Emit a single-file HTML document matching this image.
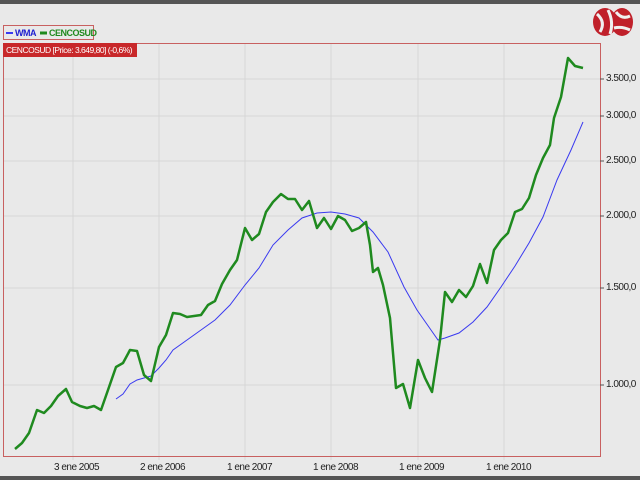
<!DOCTYPE html>
<html><head><style>
body{margin:0;width:640px;height:480px;background:#e9e9e9;overflow:hidden;font-family:"Liberation Sans",sans-serif;position:relative}
.t{position:absolute;font-size:10px;color:#222;letter-spacing:-0.5px;white-space:nowrap}
</style></head><body>
<div style="position:absolute;left:0;top:0;width:640px;height:4px;background:#555"></div>
<div style="position:absolute;left:0;top:476px;width:640px;height:4px;background:#555"></div>
<svg width="640" height="480" style="position:absolute;left:0;top:0">
<g stroke="#d6d6d6" stroke-width="1">
<line x1="73" y1="43" x2="73" y2="460"/><line x1="159" y1="43" x2="159" y2="460"/><line x1="245" y1="43" x2="245" y2="460"/><line x1="331" y1="43" x2="331" y2="460"/><line x1="418" y1="43" x2="418" y2="460"/><line x1="504" y1="43" x2="504" y2="460"/>
<line x1="3" y1="79" x2="604" y2="79"/><line x1="3" y1="116" x2="604" y2="116"/><line x1="3" y1="161" x2="604" y2="161"/><line x1="3" y1="216" x2="604" y2="216"/><line x1="3" y1="288" x2="604" y2="288"/><line x1="3" y1="385" x2="604" y2="385"/>
</g>
<rect x="3.5" y="43.5" width="597" height="413" fill="none" stroke="#c86060" stroke-width="1"/>
<rect x="3.5" y="25.5" width="90" height="14" fill="none" stroke="#c86060"/>
<polyline fill="none" stroke="#3a3af0" stroke-width="1" points="116,399 123,394 130,384 137,380 144,378 151,376 159,368 166,360 173,350 187,340 201,330 215,320 230,305 245,285 259,268 273,245 288,230 302,218 317,213 331,212 345,214 359,218 373,232 388,252 404,287 417,310 431,330 438,340 445,338 459,333 473,322 487,307 501,287 515,266 529,243 543,217 557,180 571,150 583,122"/>
<polyline fill="none" stroke="#1f8a1f" stroke-width="2.5" stroke-linejoin="round" points="15,449 22,443 29,433 37,410 44,413 51,406 58,396 66,389 72,402 80,406 87,408 94,406 101,410 108,390 116,367 123,363 130,350 137,351 144,375 151,381 159,347 166,335 173,313 180,314 187,317 194,316 201,315 208,305 215,301 222,284 230,270 237,260 245,228 252,240 259,234 266,212 273,202 281,194 288,199 295,199 302,210 309,201 317,228 324,218 331,229 338,216 345,220 352,231 359,228 366,222 370,245 373,272 378,268 383,285 390,318 396,388 403,384 410,408 418,360 425,378 432,392 440,340 445,292 452,302 459,290 466,297 473,286 480,264 487,283 494,250 501,240 508,233 515,212 522,209 529,198 536,175 543,158 550,145 554,118 561,97 568,58 575,66 583,68"/>
<g stroke="#555"><line x1="600" y1="79" x2="604" y2="79"/><line x1="600" y1="116" x2="604" y2="116"/><line x1="600" y1="161" x2="604" y2="161"/><line x1="600" y1="216" x2="604" y2="216"/><line x1="600" y1="288" x2="604" y2="288"/><line x1="600" y1="385" x2="604" y2="385"/></g>
<line x1="6" y1="33" x2="13" y2="33" stroke="#3a3af0" stroke-width="2"/>
<line x1="40" y1="33" x2="47" y2="33" stroke="#1f8a1f" stroke-width="3"/>
<ellipse cx="605" cy="22" rx="12" ry="14" fill="#c0202a"/>
<ellipse cx="622" cy="22" rx="11" ry="14" fill="#c0202a"/>
<path d="M597 14 Q606 22 600 32 M608 10 Q614 22 610 34 M616 12 Q622 20 630 16 M614 28 Q622 26 630 30" stroke="#f0f0f0" stroke-width="3" fill="none"/>
</svg>
<div class="t" style="left:15px;top:28px;color:#2020d0;font-weight:bold;font-size:9px">WMA</div>
<div class="t" style="left:49px;top:28px;color:#1f8a1f;font-weight:bold;font-size:9px">CENCOSUD</div>
<div style="position:absolute;left:3px;top:43px;width:134px;height:14px;background:#c8282a;color:#fff;font-size:8.5px;line-height:14px;padding-left:3px;box-sizing:border-box;letter-spacing:-0.5px;white-space:nowrap;overflow:hidden">CENCOSUD [Price: 3.649,80] (-0,6%)</div>
<div class="t" style="left:606px;top:73px">3.500,0</div>
<div class="t" style="left:606px;top:110px">3.000,0</div>
<div class="t" style="left:606px;top:155px">2.500,0</div>
<div class="t" style="left:606px;top:210px">2.000,0</div>
<div class="t" style="left:606px;top:282px">1.500,0</div>
<div class="t" style="left:606px;top:379px">1.000,0</div>
<div class="t" style="left:54px;top:462px">3 ene 2005</div>
<div class="t" style="left:140px;top:462px">2 ene 2006</div>
<div class="t" style="left:227px;top:462px">1 ene 2007</div>
<div class="t" style="left:313px;top:462px">1 ene 2008</div>
<div class="t" style="left:399px;top:462px">1 ene 2009</div>
<div class="t" style="left:486px;top:462px">1 ene 2010</div>
</body></html>
